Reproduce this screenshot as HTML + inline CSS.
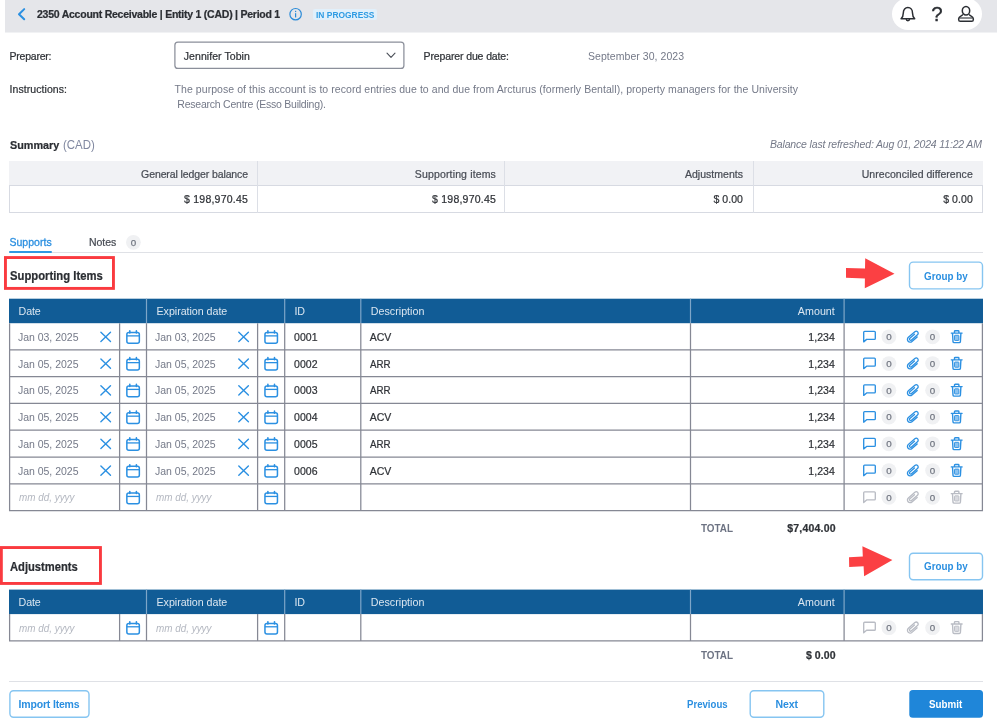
<!DOCTYPE html>
<html>
<head>
<meta charset="utf-8">
<title>2350 Account Receivable</title>
<style>
*{box-sizing:border-box;margin:0;padding:0}
html,body{width:997px;height:724px;overflow:hidden;background:#fff}
body{font-family:"Liberation Sans",sans-serif;font-size:10.5px;color:#2f3237;position:relative}
#page{position:absolute;left:0;top:0;width:997px;height:724px;will-change:transform}
.a{position:absolute}
.t{position:absolute;white-space:nowrap;line-height:1;display:block}
.s{-webkit-text-stroke:0.22px currentColor}
#topbar{position:absolute;left:5px;top:0;width:992px;height:32px;background:#e5e6ea;box-shadow:0 1px 0 #f1f2f4}
#pill{position:absolute;left:892px;top:-2px;width:90px;height:32px;border-radius:16px;background:#fff}
#badge{position:absolute;left:312.7px;top:8.7px;width:64.5px;height:11.4px;background:#e1f0fb;border-radius:2px}
#sum{position:absolute;left:9px;top:161px;width:974px;height:52px;background:#fff}
#sum .h{position:absolute;left:0;top:0;width:974px;height:24px;background:#f1f2f5}
#sum .d{position:absolute;left:0;top:24px;width:974px;height:28px;border:1px solid #d7dae2}
#sum .v{position:absolute;top:0;width:1px;height:52px;background:#dcdfe6}
#tabline{position:absolute;left:9px;top:252px;width:974px;height:1px;background:#dfe1e6}
#tabsel{position:absolute;left:9px;top:251px;width:43px;height:2px;border-radius:1px;background:#2f98e2}
.hr{position:absolute;left:9px;top:681px;width:974px;height:1px;background:#dfe1e6}
</style>
</head>
<body>
<div id="page">
<div id="topbar"></div>
<svg class="a" style="left:16px;top:7px" width="11" height="15" viewBox="-0.6 -0.2 11 15"><path d="M7.6 1.9 L2.4 7 L7.6 12.1" fill="none" stroke="#2b90e2" stroke-width="2" stroke-linecap="round" stroke-linejoin="round"/></svg>
<div class="t s" style="font-size:10.5px;color:#2b2e33;font-weight:bold;letter-spacing:-0.241px;left:37.00px;top:9.00px;">2350 Account Receivable | Entity 1 (CAD) | Period 1</div>
<svg class="a" style="left:288px;top:7px" width="15" height="15" viewBox="-0.6 -0.2 15 15"><circle cx="7" cy="7" r="5.7" fill="none" stroke="#2a8bd8" stroke-width="1.2"/><rect x="6.4" y="6" width="1.2" height="4.2" fill="#2a8bd8"/><rect x="6.4" y="3.6" width="1.2" height="1.3" fill="#2a8bd8"/></svg>
<div id="badge"></div>
<div class="t" style="font-size:9.8px;color:#2d9be3;font-weight:bold;left:315.50px;top:10.00px;transform:scaleX(0.8595);transform-origin:0 0;">IN PROGRESS</div>
<div id="pill"></div>
<svg class="a" style="left:898px;top:5px" width="19" height="19" viewBox="-0.9 -0.5 19 19"><path d="M2.2 13.2 H15.8 C14.2 11.6 13.6 10 13.6 7.4 C13.6 4.2 11.6 2 9 2 C6.4 2 4.4 4.2 4.4 7.4 C4.4 10 3.8 11.6 2.2 13.2 Z" fill="none" stroke="#2b2e33" stroke-width="1.5" stroke-linejoin="round"/><path d="M7.4 13.6 A1.6 1.6 0 0 0 10.6 13.6" fill="none" stroke="#2b2e33" stroke-width="1.5"/></svg>
<div class="t s" style="font-size:20.5px;color:#2b2e33;left:931.30px;top:4.00px;-webkit-text-stroke:0.35px #2b2e33;">?</div>
<svg class="a" style="left:957px;top:5px" width="18" height="18" viewBox="0 0 18 18"><ellipse cx="9" cy="5.8" rx="3.7" ry="4.3" fill="none" stroke="#2b2e33" stroke-width="1.5"/><path d="M5.9 9.3 C4.8 11.4 1.7 11 1.7 13.8 V14.7 Q1.7 16.3 3.3 16.3 H14.7 Q16.3 16.3 16.3 14.7 V13.8 C16.3 11 13.2 11.4 12.1 9.3" fill="none" stroke="#2b2e33" stroke-width="1.5" stroke-linejoin="round"/><path d="M2.4 13 H15.6" stroke="#2b2e33" stroke-width="1.1" fill="none"/></svg>
<div class="t s" style="font-size:10.5px;color:#2f3237;letter-spacing:-0.223px;left:9.50px;top:51.00px;">Preparer:</div>
<svg class="a" style="left:173px;top:40px" width="233" height="31" viewBox="0 0 233 31"><rect x="1.9" y="2.1" width="229" height="26.3" rx="3" fill="#fff" stroke="#8b8f9a" stroke-width="1.25"/></svg>
<div class="t s" style="font-size:10.5px;color:#2f3237;letter-spacing:0.062px;left:183.80px;top:51.00px;">Jennifer Tobin</div>
<svg class="a" style="left:386px;top:52px" width="10" height="7" viewBox="0 0 10 7"><path d="M1 1.2 L5 5.4 L9 1.2" fill="none" stroke="#4a4e57" stroke-width="1.1" stroke-linecap="round" stroke-linejoin="round"/></svg>
<div class="t s" style="font-size:10.5px;color:#2f3237;letter-spacing:-0.121px;left:423.50px;top:51.00px;">Preparer due date:</div>
<div class="t" style="font-size:10.5px;color:#747988;letter-spacing:0.050px;left:588.00px;top:51.00px;">September 30, 2023</div>
<div class="t s" style="font-size:10.5px;color:#2f3237;letter-spacing:0.074px;left:9.50px;top:84.00px;">Instructions:</div>
<div class="t" style="font-size:10.5px;color:#747988;letter-spacing:0.058px;left:174.60px;top:84.00px;">The purpose of this account is to record entries due to and due from Arcturus (formerly Bentall), property managers for the University</div>
<div class="t" style="font-size:10.5px;color:#747988;letter-spacing:-0.230px;left:177.30px;top:99.00px;">Research Centre (Esso Building).</div>
<div class="t s" style="font-size:11.5px;color:#2b2e33;font-weight:bold;left:9.80px;top:140.00px;transform:scaleX(0.9404);transform-origin:0 0;">Summary</div>
<div class="t" style="font-size:12px;color:#8088a0;left:63.20px;top:139.00px;transform:scaleX(0.9541);transform-origin:0 0;">(CAD)</div>
<div class="t" style="font-size:10.5px;color:#747988;font-style:italic;letter-spacing:-0.161px;left:769.96px;top:139.00px;">Balance last refreshed: Aug 01, 2024 11:22 AM</div>
<div id="sum"><div class="h"></div><div class="d"></div><div class="v" style="left:248px"></div><div class="v" style="left:495px"></div><div class="v" style="left:744px"></div></div>
<div class="t s" style="font-size:10.5px;color:#484c55;letter-spacing:-0.103px;left:141.10px;top:169.00px;">General ledger balance</div>
<div class="t s" style="font-size:10.5px;color:#484c55;letter-spacing:0.147px;left:414.85px;top:169.00px;">Supporting items</div>
<div class="t s" style="font-size:10.5px;color:#484c55;letter-spacing:0.022px;left:684.98px;top:169.00px;">Adjustments</div>
<div class="t s" style="font-size:10.5px;color:#484c55;letter-spacing:0.040px;left:861.76px;top:169.00px;">Unreconciled difference</div>
<div class="t s" style="font-size:10.5px;color:#2f3237;letter-spacing:0.217px;left:184.08px;top:194.00px;">$ 198,970.45</div>
<div class="t s" style="font-size:10.5px;color:#2f3237;letter-spacing:0.217px;left:432.08px;top:194.00px;">$ 198,970.45</div>
<div class="t s" style="font-size:10.5px;color:#2f3237;letter-spacing:0.059px;left:713.44px;top:194.00px;">$ 0.00</div>
<div class="t s" style="font-size:10.5px;color:#2f3237;letter-spacing:0.059px;left:943.24px;top:194.00px;">$ 0.00</div>
<div class="t" style="font-size:10.5px;color:#2b8fe0;letter-spacing:0.053px;left:9.40px;top:237.00px;-webkit-text-stroke:0.3px currentColor;">Supports</div>
<div class="t s" style="font-size:10.5px;color:#484c55;letter-spacing:-0.009px;left:88.90px;top:237.00px;">Notes</div>
<svg class="a" style="left:125px;top:234px" width="17" height="17" viewBox="-0.4 -0.3 17 17"><circle cx="8" cy="8" r="7.4" fill="#f0f1f3"/></svg><div class="t" style="font-size:9.8px;color:#737883;left:130.67px;top:238.00px;-webkit-text-stroke:0.25px currentColor;">0</div>
<div id="tabline"></div><div id="tabsel"></div>
<svg class="a" style="left:0;top:254px" width="118" height="41" viewBox="0 254 118 41"><rect x="5.45" y="257.55" width="108" height="30.85" fill="none" stroke="#fa3a3f" stroke-width="2.9"/></svg>
<div class="t s" style="font-size:12px;color:#2b2e33;font-weight:bold;left:9.60px;top:270.00px;transform:scaleX(0.9395);transform-origin:0 0;">Supporting Items</div>
<svg class="a" style="left:845px;top:257px" width="51" height="33" viewBox="845 257 51 33"><polygon points="846,268 865,268.5 865.2,258.3 894.5,273.8 864.8,288.3 864.9,278.4 846,277.8" fill="#fb4043"/></svg>
<svg class="a" style="left:907px;top:260px" width="79" height="32" viewBox="907 260 79 32"><rect x="909.5" y="262.1" width="73" height="26.8" rx="3.6" fill="#fff" stroke="#86c5f1" stroke-width="1.4"/></svg>
<div class="t" style="font-size:10.5px;color:#2b8fe0;font-weight:bold;left:924.10px;top:271.00px;transform:scaleX(0.9385);transform-origin:0 0;">Group by</div>
<svg class="a" style="left:0;top:0" width="997" height="724" viewBox="0 0 997 724"><rect x="9" y="298.7" width="974" height="24.5" fill="#115c96"/><path d="M146.5 298.7 V323.2" stroke="#7ea6c8" stroke-width="1.2"/><path d="M284.7 298.7 V323.2" stroke="#7ea6c8" stroke-width="1.2"/><path d="M360.8 298.7 V323.2" stroke="#7ea6c8" stroke-width="1.2"/><path d="M690.5 298.7 V323.2" stroke="#7ea6c8" stroke-width="1.2"/><path d="M844.1 298.7 V323.2" stroke="#7ea6c8" stroke-width="1.2"/><path d="M9.6 323.2 V511.12 M119.6 323.2 V511.12 M146.5 323.2 V511.12 M257.6 323.2 V511.12 M284.7 323.2 V511.12 M360.8 323.2 V511.12 M690.5 323.2 V511.12 M844.1 323.2 V511.12 M982.4 323.2 V511.12 M9 349.96 H983 M9 376.72 H983 M9 403.48 H983 M9 430.24 H983 M9 457 H983 M9 483.76 H983 M9 510.52 H983" stroke="#858894" stroke-width="1.25" fill="none"/></svg>
<div class="t" style="font-size:10.7px;color:#dbe6f0;letter-spacing:-0.093px;left:18.50px;top:306.00px;">Date</div>
<div class="t" style="font-size:10.7px;color:#dbe6f0;letter-spacing:-0.035px;left:156.50px;top:306.00px;">Expiration date</div>
<div class="t" style="font-size:10.7px;color:#dbe6f0;letter-spacing:-0.287px;left:294.50px;top:306.00px;">ID</div>
<div class="t" style="font-size:10.7px;color:#dbe6f0;letter-spacing:0.013px;left:370.80px;top:306.00px;">Description</div>
<div class="t" style="font-size:10.7px;color:#dbe6f0;letter-spacing:0.051px;left:797.75px;top:306.00px;">Amount</div>
<div class="t" style="font-size:10.5px;color:#747988;letter-spacing:-0.011px;left:17.90px;top:332.00px;">Jan 03, 2025</div>
<svg class="a" style="left:99px;top:330px" width="13" height="13" viewBox="-0.7 -0.88 13 13"><path d="M1.2 1.4 L10.8 10.6 M10.8 1.4 L1.2 10.6" fill="none" stroke="#2b90e2" stroke-width="1.4" stroke-linecap="round"/></svg>
<svg class="a" style="left:126px;top:329px" width="15" height="15" viewBox="-0 -0.98 15 15"><rect x="0.85" y="2.5" width="12.5" height="10.7" rx="2" fill="none" stroke="#2b90e2" stroke-width="1.5"/><path d="M0.9 5.9 H13.3" fill="none" stroke="#2b90e2" stroke-width="1.3"/><path d="M3.8 0.9 V3 M10.4 0.9 V3" fill="none" stroke="#2b90e2" stroke-width="1.6" stroke-linecap="round"/></svg>
<div class="t" style="font-size:10.5px;color:#747988;letter-spacing:-0.011px;left:155.00px;top:332.00px;">Jan 03, 2025</div>
<svg class="a" style="left:237px;top:330px" width="13" height="13" viewBox="-0.6 -0.88 13 13"><path d="M1.2 1.4 L10.8 10.6 M10.8 1.4 L1.2 10.6" fill="none" stroke="#2b90e2" stroke-width="1.4" stroke-linecap="round"/></svg>
<svg class="a" style="left:264px;top:329px" width="15" height="15" viewBox="-0.1 -0.98 15 15"><rect x="0.85" y="2.5" width="12.5" height="10.7" rx="2" fill="none" stroke="#2b90e2" stroke-width="1.5"/><path d="M0.9 5.9 H13.3" fill="none" stroke="#2b90e2" stroke-width="1.3"/><path d="M3.8 0.9 V3 M10.4 0.9 V3" fill="none" stroke="#2b90e2" stroke-width="1.6" stroke-linecap="round"/></svg>
<div class="t s" style="font-size:10.5px;color:#2f3237;letter-spacing:0.047px;left:294.00px;top:332.00px;">0001</div>
<div class="t s" style="font-size:10.5px;color:#2f3237;letter-spacing:-0.097px;left:369.80px;top:332.00px;">ACV</div>
<div class="t s" style="font-size:10.5px;color:#2f3237;letter-spacing:0.055px;left:808.35px;top:332.00px;">1,234</div>
<svg class="a" style="left:862px;top:330px" width="15" height="14" viewBox="-0.4 -0.28 15 14"><path d="M2.2 1.1 H12 Q12.9 1.1 12.9 2 V8.2 Q12.9 9.1 12 9.1 H4.2 L1.3 11.6 V2 Q1.3 1.1 2.2 1.1 Z" fill="none" stroke="#2b90e2" stroke-width="1.35" stroke-linejoin="round"/></svg>
<svg class="a" style="left:880px;top:328px" width="17" height="17" viewBox="-0.9 -0.78 17 17"><circle cx="8" cy="8" r="7.4" fill="#f0f1f3"/></svg><div class="t" style="font-size:9.8px;color:#737883;left:886.17px;top:332.00px;-webkit-text-stroke:0.25px currentColor;">0</div>
<svg class="a" style="left:905px;top:328px" width="17" height="17" viewBox="-0.2 -0.78 17 17"><g transform="translate(8 8) rotate(49)"><path d="M2.75 -2.9 V4 A2.75 2.75 0 0 1 -2.75 4 V-4.6 A2 2 0 0 1 1.25 -4.6 V3.4 A1.2 1.2 0 0 1 -1.15 3.4 V-2.7" fill="none" stroke="#2b90e2" stroke-width="1.3" stroke-linecap="round"/></g></svg>
<svg class="a" style="left:924px;top:328px" width="17" height="17" viewBox="-0.6 -0.78 17 17"><circle cx="8" cy="8" r="7.4" fill="#f0f1f3"/></svg><div class="t" style="font-size:9.8px;color:#737883;left:929.87px;top:332.00px;-webkit-text-stroke:0.25px currentColor;">0</div>
<svg class="a" style="left:950px;top:329px" width="14" height="15" viewBox="-0.2 -0.68 14 15"><path d="M1.1 3.4 H11.9 M4.3 3.2 V1.7 Q4.3 1 5 1 H8 Q8.7 1 8.7 1.7 V3.2 M2.3 3.6 L2.8 11.9 Q2.9 12.9 3.9 12.9 H9.1 Q10.1 12.9 10.2 11.9 L10.7 3.6" fill="none" stroke="#2b90e2" stroke-width="1.4" stroke-linecap="round" stroke-linejoin="round"/><rect x="4.3" y="5.6" width="4.4" height="5.2" rx="0.6" fill="#2b90e2" fill-opacity="0.55" stroke="#2b90e2" stroke-width="0.9"/></svg>
<div class="t" style="font-size:10.5px;color:#747988;letter-spacing:-0.011px;left:17.90px;top:359.00px;">Jan 05, 2025</div>
<svg class="a" style="left:99px;top:357px" width="13" height="13" viewBox="-0.7 -0.64 13 13"><path d="M1.2 1.4 L10.8 10.6 M10.8 1.4 L1.2 10.6" fill="none" stroke="#2b90e2" stroke-width="1.4" stroke-linecap="round"/></svg>
<svg class="a" style="left:126px;top:356px" width="15" height="15" viewBox="-0 -0.74 15 15"><rect x="0.85" y="2.5" width="12.5" height="10.7" rx="2" fill="none" stroke="#2b90e2" stroke-width="1.5"/><path d="M0.9 5.9 H13.3" fill="none" stroke="#2b90e2" stroke-width="1.3"/><path d="M3.8 0.9 V3 M10.4 0.9 V3" fill="none" stroke="#2b90e2" stroke-width="1.6" stroke-linecap="round"/></svg>
<div class="t" style="font-size:10.5px;color:#747988;letter-spacing:-0.011px;left:155.00px;top:359.00px;">Jan 05, 2025</div>
<svg class="a" style="left:237px;top:357px" width="13" height="13" viewBox="-0.6 -0.64 13 13"><path d="M1.2 1.4 L10.8 10.6 M10.8 1.4 L1.2 10.6" fill="none" stroke="#2b90e2" stroke-width="1.4" stroke-linecap="round"/></svg>
<svg class="a" style="left:264px;top:356px" width="15" height="15" viewBox="-0.1 -0.74 15 15"><rect x="0.85" y="2.5" width="12.5" height="10.7" rx="2" fill="none" stroke="#2b90e2" stroke-width="1.5"/><path d="M0.9 5.9 H13.3" fill="none" stroke="#2b90e2" stroke-width="1.3"/><path d="M3.8 0.9 V3 M10.4 0.9 V3" fill="none" stroke="#2b90e2" stroke-width="1.6" stroke-linecap="round"/></svg>
<div class="t s" style="font-size:10.5px;color:#2f3237;letter-spacing:0.047px;left:294.00px;top:359.00px;">0002</div>
<div class="t s" style="font-size:10.5px;color:#2f3237;left:369.80px;top:359.00px;transform:scaleX(0.9291);transform-origin:0 0;">ARR</div>
<div class="t s" style="font-size:10.5px;color:#2f3237;letter-spacing:0.055px;left:808.35px;top:359.00px;">1,234</div>
<svg class="a" style="left:862px;top:357px" width="15" height="14" viewBox="-0.4 -0.04 15 14"><path d="M2.2 1.1 H12 Q12.9 1.1 12.9 2 V8.2 Q12.9 9.1 12 9.1 H4.2 L1.3 11.6 V2 Q1.3 1.1 2.2 1.1 Z" fill="none" stroke="#2b90e2" stroke-width="1.35" stroke-linejoin="round"/></svg>
<svg class="a" style="left:880px;top:355px" width="17" height="17" viewBox="-0.9 -0.54 17 17"><circle cx="8" cy="8" r="7.4" fill="#f0f1f3"/></svg><div class="t" style="font-size:9.8px;color:#737883;left:886.17px;top:359.00px;-webkit-text-stroke:0.25px currentColor;">0</div>
<svg class="a" style="left:905px;top:355px" width="17" height="17" viewBox="-0.2 -0.54 17 17"><g transform="translate(8 8) rotate(49)"><path d="M2.75 -2.9 V4 A2.75 2.75 0 0 1 -2.75 4 V-4.6 A2 2 0 0 1 1.25 -4.6 V3.4 A1.2 1.2 0 0 1 -1.15 3.4 V-2.7" fill="none" stroke="#2b90e2" stroke-width="1.3" stroke-linecap="round"/></g></svg>
<svg class="a" style="left:924px;top:355px" width="17" height="17" viewBox="-0.6 -0.54 17 17"><circle cx="8" cy="8" r="7.4" fill="#f0f1f3"/></svg><div class="t" style="font-size:9.8px;color:#737883;left:929.87px;top:359.00px;-webkit-text-stroke:0.25px currentColor;">0</div>
<svg class="a" style="left:950px;top:356px" width="14" height="15" viewBox="-0.2 -0.44 14 15"><path d="M1.1 3.4 H11.9 M4.3 3.2 V1.7 Q4.3 1 5 1 H8 Q8.7 1 8.7 1.7 V3.2 M2.3 3.6 L2.8 11.9 Q2.9 12.9 3.9 12.9 H9.1 Q10.1 12.9 10.2 11.9 L10.7 3.6" fill="none" stroke="#2b90e2" stroke-width="1.4" stroke-linecap="round" stroke-linejoin="round"/><rect x="4.3" y="5.6" width="4.4" height="5.2" rx="0.6" fill="#2b90e2" fill-opacity="0.55" stroke="#2b90e2" stroke-width="0.9"/></svg>
<div class="t" style="font-size:10.5px;color:#747988;letter-spacing:-0.011px;left:17.90px;top:385.00px;">Jan 05, 2025</div>
<svg class="a" style="left:99px;top:384px" width="13" height="13" viewBox="-0.7 -0.4 13 13"><path d="M1.2 1.4 L10.8 10.6 M10.8 1.4 L1.2 10.6" fill="none" stroke="#2b90e2" stroke-width="1.4" stroke-linecap="round"/></svg>
<svg class="a" style="left:126px;top:383px" width="15" height="15" viewBox="-0 -0.5 15 15"><rect x="0.85" y="2.5" width="12.5" height="10.7" rx="2" fill="none" stroke="#2b90e2" stroke-width="1.5"/><path d="M0.9 5.9 H13.3" fill="none" stroke="#2b90e2" stroke-width="1.3"/><path d="M3.8 0.9 V3 M10.4 0.9 V3" fill="none" stroke="#2b90e2" stroke-width="1.6" stroke-linecap="round"/></svg>
<div class="t" style="font-size:10.5px;color:#747988;letter-spacing:-0.011px;left:155.00px;top:385.00px;">Jan 05, 2025</div>
<svg class="a" style="left:237px;top:384px" width="13" height="13" viewBox="-0.6 -0.4 13 13"><path d="M1.2 1.4 L10.8 10.6 M10.8 1.4 L1.2 10.6" fill="none" stroke="#2b90e2" stroke-width="1.4" stroke-linecap="round"/></svg>
<svg class="a" style="left:264px;top:383px" width="15" height="15" viewBox="-0.1 -0.5 15 15"><rect x="0.85" y="2.5" width="12.5" height="10.7" rx="2" fill="none" stroke="#2b90e2" stroke-width="1.5"/><path d="M0.9 5.9 H13.3" fill="none" stroke="#2b90e2" stroke-width="1.3"/><path d="M3.8 0.9 V3 M10.4 0.9 V3" fill="none" stroke="#2b90e2" stroke-width="1.6" stroke-linecap="round"/></svg>
<div class="t s" style="font-size:10.5px;color:#2f3237;letter-spacing:0.047px;left:294.00px;top:385.00px;">0003</div>
<div class="t s" style="font-size:10.5px;color:#2f3237;left:369.80px;top:385.00px;transform:scaleX(0.9291);transform-origin:0 0;">ARR</div>
<div class="t s" style="font-size:10.5px;color:#2f3237;letter-spacing:0.055px;left:808.35px;top:385.00px;">1,234</div>
<svg class="a" style="left:862px;top:383px" width="15" height="14" viewBox="-0.4 -0.8 15 14"><path d="M2.2 1.1 H12 Q12.9 1.1 12.9 2 V8.2 Q12.9 9.1 12 9.1 H4.2 L1.3 11.6 V2 Q1.3 1.1 2.2 1.1 Z" fill="none" stroke="#2b90e2" stroke-width="1.35" stroke-linejoin="round"/></svg>
<svg class="a" style="left:880px;top:382px" width="17" height="17" viewBox="-0.9 -0.3 17 17"><circle cx="8" cy="8" r="7.4" fill="#f0f1f3"/></svg><div class="t" style="font-size:9.8px;color:#737883;left:886.17px;top:386.00px;-webkit-text-stroke:0.25px currentColor;">0</div>
<svg class="a" style="left:905px;top:382px" width="17" height="17" viewBox="-0.2 -0.3 17 17"><g transform="translate(8 8) rotate(49)"><path d="M2.75 -2.9 V4 A2.75 2.75 0 0 1 -2.75 4 V-4.6 A2 2 0 0 1 1.25 -4.6 V3.4 A1.2 1.2 0 0 1 -1.15 3.4 V-2.7" fill="none" stroke="#2b90e2" stroke-width="1.3" stroke-linecap="round"/></g></svg>
<svg class="a" style="left:924px;top:382px" width="17" height="17" viewBox="-0.6 -0.3 17 17"><circle cx="8" cy="8" r="7.4" fill="#f0f1f3"/></svg><div class="t" style="font-size:9.8px;color:#737883;left:929.87px;top:386.00px;-webkit-text-stroke:0.25px currentColor;">0</div>
<svg class="a" style="left:950px;top:383px" width="14" height="15" viewBox="-0.2 -0.2 14 15"><path d="M1.1 3.4 H11.9 M4.3 3.2 V1.7 Q4.3 1 5 1 H8 Q8.7 1 8.7 1.7 V3.2 M2.3 3.6 L2.8 11.9 Q2.9 12.9 3.9 12.9 H9.1 Q10.1 12.9 10.2 11.9 L10.7 3.6" fill="none" stroke="#2b90e2" stroke-width="1.4" stroke-linecap="round" stroke-linejoin="round"/><rect x="4.3" y="5.6" width="4.4" height="5.2" rx="0.6" fill="#2b90e2" fill-opacity="0.55" stroke="#2b90e2" stroke-width="0.9"/></svg>
<div class="t" style="font-size:10.5px;color:#747988;letter-spacing:-0.011px;left:17.90px;top:412.00px;">Jan 05, 2025</div>
<svg class="a" style="left:99px;top:411px" width="13" height="13" viewBox="-0.7 -0.16 13 13"><path d="M1.2 1.4 L10.8 10.6 M10.8 1.4 L1.2 10.6" fill="none" stroke="#2b90e2" stroke-width="1.4" stroke-linecap="round"/></svg>
<svg class="a" style="left:126px;top:410px" width="15" height="15" viewBox="-0 -0.26 15 15"><rect x="0.85" y="2.5" width="12.5" height="10.7" rx="2" fill="none" stroke="#2b90e2" stroke-width="1.5"/><path d="M0.9 5.9 H13.3" fill="none" stroke="#2b90e2" stroke-width="1.3"/><path d="M3.8 0.9 V3 M10.4 0.9 V3" fill="none" stroke="#2b90e2" stroke-width="1.6" stroke-linecap="round"/></svg>
<div class="t" style="font-size:10.5px;color:#747988;letter-spacing:-0.011px;left:155.00px;top:412.00px;">Jan 05, 2025</div>
<svg class="a" style="left:237px;top:411px" width="13" height="13" viewBox="-0.6 -0.16 13 13"><path d="M1.2 1.4 L10.8 10.6 M10.8 1.4 L1.2 10.6" fill="none" stroke="#2b90e2" stroke-width="1.4" stroke-linecap="round"/></svg>
<svg class="a" style="left:264px;top:410px" width="15" height="15" viewBox="-0.1 -0.26 15 15"><rect x="0.85" y="2.5" width="12.5" height="10.7" rx="2" fill="none" stroke="#2b90e2" stroke-width="1.5"/><path d="M0.9 5.9 H13.3" fill="none" stroke="#2b90e2" stroke-width="1.3"/><path d="M3.8 0.9 V3 M10.4 0.9 V3" fill="none" stroke="#2b90e2" stroke-width="1.6" stroke-linecap="round"/></svg>
<div class="t s" style="font-size:10.5px;color:#2f3237;letter-spacing:0.047px;left:294.00px;top:412.00px;">0004</div>
<div class="t s" style="font-size:10.5px;color:#2f3237;letter-spacing:-0.097px;left:369.80px;top:412.00px;">ACV</div>
<div class="t s" style="font-size:10.5px;color:#2f3237;letter-spacing:0.055px;left:808.35px;top:412.00px;">1,234</div>
<svg class="a" style="left:862px;top:410px" width="15" height="14" viewBox="-0.4 -0.56 15 14"><path d="M2.2 1.1 H12 Q12.9 1.1 12.9 2 V8.2 Q12.9 9.1 12 9.1 H4.2 L1.3 11.6 V2 Q1.3 1.1 2.2 1.1 Z" fill="none" stroke="#2b90e2" stroke-width="1.35" stroke-linejoin="round"/></svg>
<svg class="a" style="left:880px;top:409px" width="17" height="17" viewBox="-0.9 -0.06 17 17"><circle cx="8" cy="8" r="7.4" fill="#f0f1f3"/></svg><div class="t" style="font-size:9.8px;color:#737883;left:886.17px;top:412.00px;-webkit-text-stroke:0.25px currentColor;">0</div>
<svg class="a" style="left:905px;top:409px" width="17" height="17" viewBox="-0.2 -0.06 17 17"><g transform="translate(8 8) rotate(49)"><path d="M2.75 -2.9 V4 A2.75 2.75 0 0 1 -2.75 4 V-4.6 A2 2 0 0 1 1.25 -4.6 V3.4 A1.2 1.2 0 0 1 -1.15 3.4 V-2.7" fill="none" stroke="#2b90e2" stroke-width="1.3" stroke-linecap="round"/></g></svg>
<svg class="a" style="left:924px;top:409px" width="17" height="17" viewBox="-0.6 -0.06 17 17"><circle cx="8" cy="8" r="7.4" fill="#f0f1f3"/></svg><div class="t" style="font-size:9.8px;color:#737883;left:929.87px;top:412.00px;-webkit-text-stroke:0.25px currentColor;">0</div>
<svg class="a" style="left:950px;top:409px" width="14" height="15" viewBox="-0.2 -0.96 14 15"><path d="M1.1 3.4 H11.9 M4.3 3.2 V1.7 Q4.3 1 5 1 H8 Q8.7 1 8.7 1.7 V3.2 M2.3 3.6 L2.8 11.9 Q2.9 12.9 3.9 12.9 H9.1 Q10.1 12.9 10.2 11.9 L10.7 3.6" fill="none" stroke="#2b90e2" stroke-width="1.4" stroke-linecap="round" stroke-linejoin="round"/><rect x="4.3" y="5.6" width="4.4" height="5.2" rx="0.6" fill="#2b90e2" fill-opacity="0.55" stroke="#2b90e2" stroke-width="0.9"/></svg>
<div class="t" style="font-size:10.5px;color:#747988;letter-spacing:-0.011px;left:17.90px;top:439.00px;">Jan 05, 2025</div>
<svg class="a" style="left:99px;top:437px" width="13" height="13" viewBox="-0.7 -0.92 13 13"><path d="M1.2 1.4 L10.8 10.6 M10.8 1.4 L1.2 10.6" fill="none" stroke="#2b90e2" stroke-width="1.4" stroke-linecap="round"/></svg>
<svg class="a" style="left:126px;top:437px" width="15" height="15" viewBox="-0 -0.02 15 15"><rect x="0.85" y="2.5" width="12.5" height="10.7" rx="2" fill="none" stroke="#2b90e2" stroke-width="1.5"/><path d="M0.9 5.9 H13.3" fill="none" stroke="#2b90e2" stroke-width="1.3"/><path d="M3.8 0.9 V3 M10.4 0.9 V3" fill="none" stroke="#2b90e2" stroke-width="1.6" stroke-linecap="round"/></svg>
<div class="t" style="font-size:10.5px;color:#747988;letter-spacing:-0.011px;left:155.00px;top:439.00px;">Jan 05, 2025</div>
<svg class="a" style="left:237px;top:437px" width="13" height="13" viewBox="-0.6 -0.92 13 13"><path d="M1.2 1.4 L10.8 10.6 M10.8 1.4 L1.2 10.6" fill="none" stroke="#2b90e2" stroke-width="1.4" stroke-linecap="round"/></svg>
<svg class="a" style="left:264px;top:437px" width="15" height="15" viewBox="-0.1 -0.02 15 15"><rect x="0.85" y="2.5" width="12.5" height="10.7" rx="2" fill="none" stroke="#2b90e2" stroke-width="1.5"/><path d="M0.9 5.9 H13.3" fill="none" stroke="#2b90e2" stroke-width="1.3"/><path d="M3.8 0.9 V3 M10.4 0.9 V3" fill="none" stroke="#2b90e2" stroke-width="1.6" stroke-linecap="round"/></svg>
<div class="t s" style="font-size:10.5px;color:#2f3237;letter-spacing:0.047px;left:294.00px;top:439.00px;">0005</div>
<div class="t s" style="font-size:10.5px;color:#2f3237;left:369.80px;top:439.00px;transform:scaleX(0.9291);transform-origin:0 0;">ARR</div>
<div class="t s" style="font-size:10.5px;color:#2f3237;letter-spacing:0.055px;left:808.35px;top:439.00px;">1,234</div>
<svg class="a" style="left:862px;top:437px" width="15" height="14" viewBox="-0.4 -0.32 15 14"><path d="M2.2 1.1 H12 Q12.9 1.1 12.9 2 V8.2 Q12.9 9.1 12 9.1 H4.2 L1.3 11.6 V2 Q1.3 1.1 2.2 1.1 Z" fill="none" stroke="#2b90e2" stroke-width="1.35" stroke-linejoin="round"/></svg>
<svg class="a" style="left:880px;top:435px" width="17" height="17" viewBox="-0.9 -0.82 17 17"><circle cx="8" cy="8" r="7.4" fill="#f0f1f3"/></svg><div class="t" style="font-size:9.8px;color:#737883;left:886.17px;top:439.00px;-webkit-text-stroke:0.25px currentColor;">0</div>
<svg class="a" style="left:905px;top:435px" width="17" height="17" viewBox="-0.2 -0.82 17 17"><g transform="translate(8 8) rotate(49)"><path d="M2.75 -2.9 V4 A2.75 2.75 0 0 1 -2.75 4 V-4.6 A2 2 0 0 1 1.25 -4.6 V3.4 A1.2 1.2 0 0 1 -1.15 3.4 V-2.7" fill="none" stroke="#2b90e2" stroke-width="1.3" stroke-linecap="round"/></g></svg>
<svg class="a" style="left:924px;top:435px" width="17" height="17" viewBox="-0.6 -0.82 17 17"><circle cx="8" cy="8" r="7.4" fill="#f0f1f3"/></svg><div class="t" style="font-size:9.8px;color:#737883;left:929.87px;top:439.00px;-webkit-text-stroke:0.25px currentColor;">0</div>
<svg class="a" style="left:950px;top:436px" width="14" height="15" viewBox="-0.2 -0.72 14 15"><path d="M1.1 3.4 H11.9 M4.3 3.2 V1.7 Q4.3 1 5 1 H8 Q8.7 1 8.7 1.7 V3.2 M2.3 3.6 L2.8 11.9 Q2.9 12.9 3.9 12.9 H9.1 Q10.1 12.9 10.2 11.9 L10.7 3.6" fill="none" stroke="#2b90e2" stroke-width="1.4" stroke-linecap="round" stroke-linejoin="round"/><rect x="4.3" y="5.6" width="4.4" height="5.2" rx="0.6" fill="#2b90e2" fill-opacity="0.55" stroke="#2b90e2" stroke-width="0.9"/></svg>
<div class="t" style="font-size:10.5px;color:#747988;letter-spacing:-0.011px;left:17.90px;top:466.00px;">Jan 05, 2025</div>
<svg class="a" style="left:99px;top:464px" width="13" height="13" viewBox="-0.7 -0.68 13 13"><path d="M1.2 1.4 L10.8 10.6 M10.8 1.4 L1.2 10.6" fill="none" stroke="#2b90e2" stroke-width="1.4" stroke-linecap="round"/></svg>
<svg class="a" style="left:126px;top:463px" width="15" height="15" viewBox="-0 -0.78 15 15"><rect x="0.85" y="2.5" width="12.5" height="10.7" rx="2" fill="none" stroke="#2b90e2" stroke-width="1.5"/><path d="M0.9 5.9 H13.3" fill="none" stroke="#2b90e2" stroke-width="1.3"/><path d="M3.8 0.9 V3 M10.4 0.9 V3" fill="none" stroke="#2b90e2" stroke-width="1.6" stroke-linecap="round"/></svg>
<div class="t" style="font-size:10.5px;color:#747988;letter-spacing:-0.011px;left:155.00px;top:466.00px;">Jan 05, 2025</div>
<svg class="a" style="left:237px;top:464px" width="13" height="13" viewBox="-0.6 -0.68 13 13"><path d="M1.2 1.4 L10.8 10.6 M10.8 1.4 L1.2 10.6" fill="none" stroke="#2b90e2" stroke-width="1.4" stroke-linecap="round"/></svg>
<svg class="a" style="left:264px;top:463px" width="15" height="15" viewBox="-0.1 -0.78 15 15"><rect x="0.85" y="2.5" width="12.5" height="10.7" rx="2" fill="none" stroke="#2b90e2" stroke-width="1.5"/><path d="M0.9 5.9 H13.3" fill="none" stroke="#2b90e2" stroke-width="1.3"/><path d="M3.8 0.9 V3 M10.4 0.9 V3" fill="none" stroke="#2b90e2" stroke-width="1.6" stroke-linecap="round"/></svg>
<div class="t s" style="font-size:10.5px;color:#2f3237;letter-spacing:0.047px;left:294.00px;top:466.00px;">0006</div>
<div class="t s" style="font-size:10.5px;color:#2f3237;letter-spacing:-0.097px;left:369.80px;top:466.00px;">ACV</div>
<div class="t s" style="font-size:10.5px;color:#2f3237;letter-spacing:0.055px;left:808.35px;top:466.00px;">1,234</div>
<svg class="a" style="left:862px;top:464px" width="15" height="14" viewBox="-0.4 -0.08 15 14"><path d="M2.2 1.1 H12 Q12.9 1.1 12.9 2 V8.2 Q12.9 9.1 12 9.1 H4.2 L1.3 11.6 V2 Q1.3 1.1 2.2 1.1 Z" fill="none" stroke="#2b90e2" stroke-width="1.35" stroke-linejoin="round"/></svg>
<svg class="a" style="left:880px;top:462px" width="17" height="17" viewBox="-0.9 -0.58 17 17"><circle cx="8" cy="8" r="7.4" fill="#f0f1f3"/></svg><div class="t" style="font-size:9.8px;color:#737883;left:886.17px;top:466.00px;-webkit-text-stroke:0.25px currentColor;">0</div>
<svg class="a" style="left:905px;top:462px" width="17" height="17" viewBox="-0.2 -0.58 17 17"><g transform="translate(8 8) rotate(49)"><path d="M2.75 -2.9 V4 A2.75 2.75 0 0 1 -2.75 4 V-4.6 A2 2 0 0 1 1.25 -4.6 V3.4 A1.2 1.2 0 0 1 -1.15 3.4 V-2.7" fill="none" stroke="#2b90e2" stroke-width="1.3" stroke-linecap="round"/></g></svg>
<svg class="a" style="left:924px;top:462px" width="17" height="17" viewBox="-0.6 -0.58 17 17"><circle cx="8" cy="8" r="7.4" fill="#f0f1f3"/></svg><div class="t" style="font-size:9.8px;color:#737883;left:929.87px;top:466.00px;-webkit-text-stroke:0.25px currentColor;">0</div>
<svg class="a" style="left:950px;top:463px" width="14" height="15" viewBox="-0.2 -0.48 14 15"><path d="M1.1 3.4 H11.9 M4.3 3.2 V1.7 Q4.3 1 5 1 H8 Q8.7 1 8.7 1.7 V3.2 M2.3 3.6 L2.8 11.9 Q2.9 12.9 3.9 12.9 H9.1 Q10.1 12.9 10.2 11.9 L10.7 3.6" fill="none" stroke="#2b90e2" stroke-width="1.4" stroke-linecap="round" stroke-linejoin="round"/><rect x="4.3" y="5.6" width="4.4" height="5.2" rx="0.6" fill="#2b90e2" fill-opacity="0.55" stroke="#2b90e2" stroke-width="0.9"/></svg>
<div class="t" style="font-size:10.5px;color:#b4b8c1;font-style:italic;left:18.50px;top:492.00px;transform:scaleX(0.9417);transform-origin:0 0;">mm dd, yyyy</div>
<svg class="a" style="left:126px;top:490px" width="15" height="15" viewBox="-0 -0.54 15 15"><rect x="0.85" y="2.5" width="12.5" height="10.7" rx="2" fill="none" stroke="#2b90e2" stroke-width="1.5"/><path d="M0.9 5.9 H13.3" fill="none" stroke="#2b90e2" stroke-width="1.3"/><path d="M3.8 0.9 V3 M10.4 0.9 V3" fill="none" stroke="#2b90e2" stroke-width="1.6" stroke-linecap="round"/></svg>
<div class="t" style="font-size:10.5px;color:#b4b8c1;font-style:italic;left:155.70px;top:492.00px;transform:scaleX(0.9417);transform-origin:0 0;">mm dd, yyyy</div>
<svg class="a" style="left:264px;top:490px" width="15" height="15" viewBox="-0.1 -0.54 15 15"><rect x="0.85" y="2.5" width="12.5" height="10.7" rx="2" fill="none" stroke="#2b90e2" stroke-width="1.5"/><path d="M0.9 5.9 H13.3" fill="none" stroke="#2b90e2" stroke-width="1.3"/><path d="M3.8 0.9 V3 M10.4 0.9 V3" fill="none" stroke="#2b90e2" stroke-width="1.6" stroke-linecap="round"/></svg>
<svg class="a" style="left:862px;top:490px" width="15" height="14" viewBox="-0.4 -0.84 15 14"><path d="M2.2 1.1 H12 Q12.9 1.1 12.9 2 V8.2 Q12.9 9.1 12 9.1 H4.2 L1.3 11.6 V2 Q1.3 1.1 2.2 1.1 Z" fill="none" stroke="#b9bcc4" stroke-width="1.35" stroke-linejoin="round"/></svg>
<svg class="a" style="left:880px;top:489px" width="17" height="17" viewBox="-0.9 -0.34 17 17"><circle cx="8" cy="8" r="7.4" fill="#f0f1f3"/></svg><div class="t" style="font-size:9.8px;color:#737883;left:886.17px;top:493.00px;-webkit-text-stroke:0.25px currentColor;">0</div>
<svg class="a" style="left:905px;top:489px" width="17" height="17" viewBox="-0.2 -0.34 17 17"><g transform="translate(8 8) rotate(49)"><path d="M2.75 -2.9 V4 A2.75 2.75 0 0 1 -2.75 4 V-4.6 A2 2 0 0 1 1.25 -4.6 V3.4 A1.2 1.2 0 0 1 -1.15 3.4 V-2.7" fill="none" stroke="#b9bcc4" stroke-width="1.3" stroke-linecap="round"/></g></svg>
<svg class="a" style="left:924px;top:489px" width="17" height="17" viewBox="-0.6 -0.34 17 17"><circle cx="8" cy="8" r="7.4" fill="#f0f1f3"/></svg><div class="t" style="font-size:9.8px;color:#737883;left:929.87px;top:493.00px;-webkit-text-stroke:0.25px currentColor;">0</div>
<svg class="a" style="left:950px;top:490px" width="14" height="15" viewBox="-0.2 -0.24 14 15"><path d="M1.1 3.4 H11.9 M4.3 3.2 V1.7 Q4.3 1 5 1 H8 Q8.7 1 8.7 1.7 V3.2 M2.3 3.6 L2.8 11.9 Q2.9 12.9 3.9 12.9 H9.1 Q10.1 12.9 10.2 11.9 L10.7 3.6" fill="none" stroke="#b9bcc4" stroke-width="1.4" stroke-linecap="round" stroke-linejoin="round"/><rect x="4.3" y="5.6" width="4.4" height="5.2" rx="0.6" fill="#b9bcc4" fill-opacity="0.55" stroke="#b9bcc4" stroke-width="0.9"/></svg>
<div class="t" style="font-size:10.5px;color:#6d7383;font-weight:bold;left:701.00px;top:523.00px;transform:scaleX(0.9403);transform-origin:0 0;">TOTAL</div>
<div class="t s" style="font-size:10.5px;color:#2f3237;font-weight:bold;letter-spacing:0.198px;left:787.30px;top:523.00px;">$7,404.00</div>
<svg class="a" style="left:0;top:544px" width="105" height="46" viewBox="0 544 105 46"><rect x="1.35" y="547.55" width="99.1" height="35.9" fill="none" stroke="#fa3a3f" stroke-width="2.9"/></svg>
<div class="t s" style="font-size:12px;color:#2b2e33;font-weight:bold;left:9.70px;top:561.00px;transform:scaleX(0.9328);transform-origin:0 0;">Adjustments</div>
<svg class="a" style="left:848px;top:545px" width="46" height="33" viewBox="848 545 46 33"><polygon points="849,557.2 862.8,556.4 862.4,546.3 892.4,560 864.1,576.3 863.6,566.2 849.2,566.9" fill="#fb4043"/></svg>
<svg class="a" style="left:907px;top:551px" width="79" height="32" viewBox="907 551 79 32"><rect x="909.5" y="553.3" width="73" height="26.4" rx="3.6" fill="#fff" stroke="#86c5f1" stroke-width="1.4"/></svg>
<div class="t" style="font-size:10.5px;color:#2b8fe0;font-weight:bold;left:924.10px;top:561.00px;transform:scaleX(0.9385);transform-origin:0 0;">Group by</div>
<svg class="a" style="left:0;top:0" width="997" height="724" viewBox="0 0 997 724"><rect x="9" y="589.6" width="974" height="24.5" fill="#115c96"/><path d="M146.5 589.6 V614.1" stroke="#7ea6c8" stroke-width="1.2"/><path d="M284.7 589.6 V614.1" stroke="#7ea6c8" stroke-width="1.2"/><path d="M360.8 589.6 V614.1" stroke="#7ea6c8" stroke-width="1.2"/><path d="M690.5 589.6 V614.1" stroke="#7ea6c8" stroke-width="1.2"/><path d="M844.1 589.6 V614.1" stroke="#7ea6c8" stroke-width="1.2"/><path d="M9.6 614.1 V641.46 M119.6 614.1 V641.46 M146.5 614.1 V641.46 M257.6 614.1 V641.46 M284.7 614.1 V641.46 M360.8 614.1 V641.46 M690.5 614.1 V641.46 M844.1 614.1 V641.46 M982.4 614.1 V641.46 M9 640.86 H983" stroke="#858894" stroke-width="1.25" fill="none"/></svg>
<div class="t" style="font-size:10.7px;color:#dbe6f0;letter-spacing:-0.093px;left:18.50px;top:597.00px;">Date</div>
<div class="t" style="font-size:10.7px;color:#dbe6f0;letter-spacing:-0.035px;left:156.50px;top:597.00px;">Expiration date</div>
<div class="t" style="font-size:10.7px;color:#dbe6f0;letter-spacing:-0.287px;left:294.50px;top:597.00px;">ID</div>
<div class="t" style="font-size:10.7px;color:#dbe6f0;letter-spacing:0.013px;left:370.80px;top:597.00px;">Description</div>
<div class="t" style="font-size:10.7px;color:#dbe6f0;letter-spacing:0.051px;left:797.75px;top:597.00px;">Amount</div>
<div class="t" style="font-size:10.5px;color:#b4b8c1;font-style:italic;left:18.50px;top:623.00px;transform:scaleX(0.9417);transform-origin:0 0;">mm dd, yyyy</div>
<svg class="a" style="left:126px;top:620px" width="15" height="15" viewBox="-0 -0.88 15 15"><rect x="0.85" y="2.5" width="12.5" height="10.7" rx="2" fill="none" stroke="#2b90e2" stroke-width="1.5"/><path d="M0.9 5.9 H13.3" fill="none" stroke="#2b90e2" stroke-width="1.3"/><path d="M3.8 0.9 V3 M10.4 0.9 V3" fill="none" stroke="#2b90e2" stroke-width="1.6" stroke-linecap="round"/></svg>
<div class="t" style="font-size:10.5px;color:#b4b8c1;font-style:italic;left:155.70px;top:623.00px;transform:scaleX(0.9417);transform-origin:0 0;">mm dd, yyyy</div>
<svg class="a" style="left:264px;top:620px" width="15" height="15" viewBox="-0.1 -0.88 15 15"><rect x="0.85" y="2.5" width="12.5" height="10.7" rx="2" fill="none" stroke="#2b90e2" stroke-width="1.5"/><path d="M0.9 5.9 H13.3" fill="none" stroke="#2b90e2" stroke-width="1.3"/><path d="M3.8 0.9 V3 M10.4 0.9 V3" fill="none" stroke="#2b90e2" stroke-width="1.6" stroke-linecap="round"/></svg>
<svg class="a" style="left:862px;top:621px" width="15" height="14" viewBox="-0.4 -0.18 15 14"><path d="M2.2 1.1 H12 Q12.9 1.1 12.9 2 V8.2 Q12.9 9.1 12 9.1 H4.2 L1.3 11.6 V2 Q1.3 1.1 2.2 1.1 Z" fill="none" stroke="#b9bcc4" stroke-width="1.35" stroke-linejoin="round"/></svg>
<svg class="a" style="left:880px;top:619px" width="17" height="17" viewBox="-0.9 -0.68 17 17"><circle cx="8" cy="8" r="7.4" fill="#f0f1f3"/></svg><div class="t" style="font-size:9.8px;color:#737883;left:886.17px;top:623.00px;-webkit-text-stroke:0.25px currentColor;">0</div>
<svg class="a" style="left:905px;top:619px" width="17" height="17" viewBox="-0.2 -0.68 17 17"><g transform="translate(8 8) rotate(49)"><path d="M2.75 -2.9 V4 A2.75 2.75 0 0 1 -2.75 4 V-4.6 A2 2 0 0 1 1.25 -4.6 V3.4 A1.2 1.2 0 0 1 -1.15 3.4 V-2.7" fill="none" stroke="#b9bcc4" stroke-width="1.3" stroke-linecap="round"/></g></svg>
<svg class="a" style="left:924px;top:619px" width="17" height="17" viewBox="-0.6 -0.68 17 17"><circle cx="8" cy="8" r="7.4" fill="#f0f1f3"/></svg><div class="t" style="font-size:9.8px;color:#737883;left:929.87px;top:623.00px;-webkit-text-stroke:0.25px currentColor;">0</div>
<svg class="a" style="left:950px;top:620px" width="14" height="15" viewBox="-0.2 -0.58 14 15"><path d="M1.1 3.4 H11.9 M4.3 3.2 V1.7 Q4.3 1 5 1 H8 Q8.7 1 8.7 1.7 V3.2 M2.3 3.6 L2.8 11.9 Q2.9 12.9 3.9 12.9 H9.1 Q10.1 12.9 10.2 11.9 L10.7 3.6" fill="none" stroke="#b9bcc4" stroke-width="1.4" stroke-linecap="round" stroke-linejoin="round"/><rect x="4.3" y="5.6" width="4.4" height="5.2" rx="0.6" fill="#b9bcc4" fill-opacity="0.55" stroke="#b9bcc4" stroke-width="0.9"/></svg>
<div class="t" style="font-size:10.5px;color:#6d7383;font-weight:bold;left:701.00px;top:650.00px;transform:scaleX(0.9403);transform-origin:0 0;">TOTAL</div>
<div class="t s" style="font-size:10.5px;color:#2f3237;font-weight:bold;letter-spacing:0.119px;left:805.88px;top:650.00px;">$ 0.00</div>
<div class="hr"></div>
<svg class="a" style="left:8px;top:689px" width="84" height="31" viewBox="8 689 84 31"><rect x="9.9" y="690.7" width="79.1" height="26.5" rx="3.6" fill="#fff" stroke="#86c5f1" stroke-width="1.4"/></svg>
<div class="t" style="font-size:10.5px;color:#2b8fe0;font-weight:bold;letter-spacing:-0.183px;left:18.60px;top:699.00px;">Import Items</div>
<div class="t" style="font-size:10.5px;color:#2b8fe0;font-weight:bold;left:687.00px;top:699.00px;transform:scaleX(0.9153);transform-origin:0 0;">Previous</div>
<svg class="a" style="left:748px;top:689px" width="79" height="31" viewBox="748 689 79 31"><rect x="750.2" y="690.7" width="73.6" height="26.5" rx="3.6" fill="#fff" stroke="#86c5f1" stroke-width="1.4"/></svg>
<div class="t" style="font-size:10.5px;color:#2b8fe0;font-weight:bold;letter-spacing:-0.122px;left:775.60px;top:699.00px;">Next</div>
<svg class="a" style="left:908px;top:689px" width="78" height="31" viewBox="908 689 78 31"><rect x="909.3" y="690.1" width="73.7" height="27.7" rx="3.5" fill="#1f86d9"/></svg>
<div class="t" style="font-size:10.5px;color:#fff;font-weight:bold;left:929.40px;top:699.00px;transform:scaleX(0.9327);transform-origin:0 0;">Submit</div>
</div>
</body>
</html>
